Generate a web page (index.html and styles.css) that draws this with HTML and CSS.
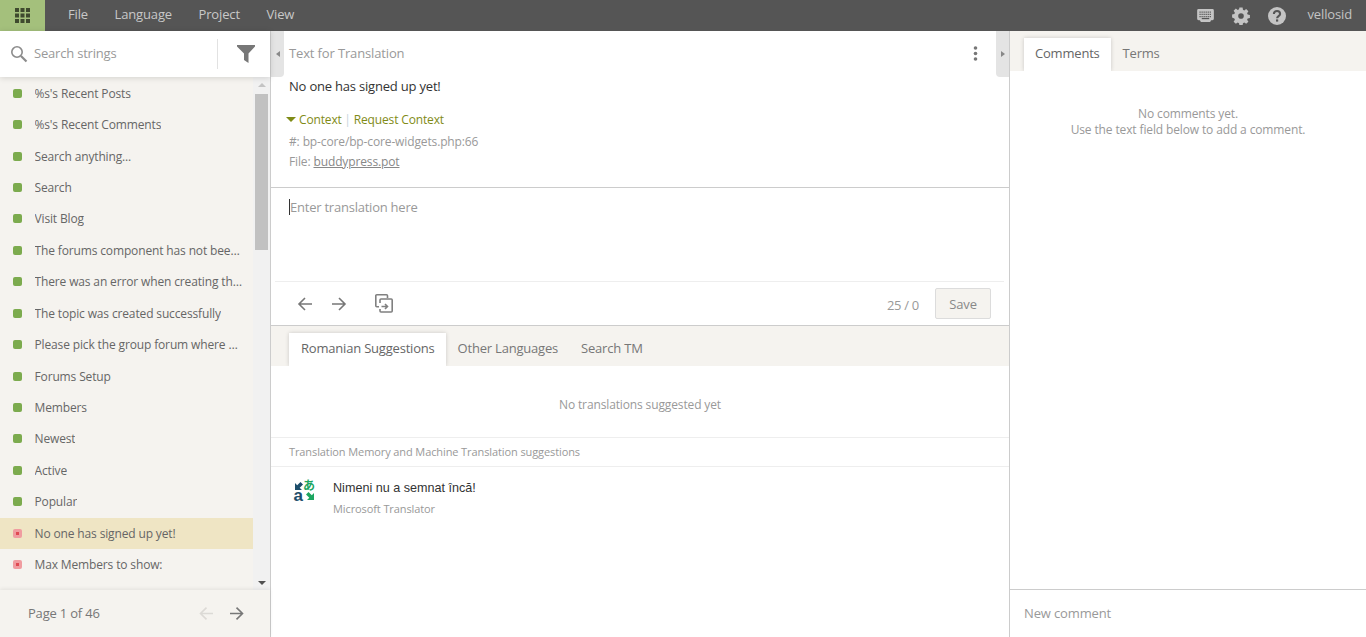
FILE: index.html
```html
<!DOCTYPE html>
<html lang="en">
<head>
<meta charset="utf-8">
<title>Translation editor</title>
<link rel="stylesheet" href="styles.css">
</head>
<body>
<header class="topbar">
  <div class="apps">
    <svg width="15" height="15" viewBox="0 0 15 15" fill="#3f4a2e"><rect x="0" y="0" width="4" height="4"/><rect x="5.5" y="0" width="4" height="4"/><rect x="11" y="0" width="4" height="4"/><rect x="0" y="5.5" width="4" height="4"/><rect x="5.5" y="5.5" width="4" height="4"/><rect x="11" y="5.5" width="4" height="4"/><rect x="0" y="11" width="4" height="4"/><rect x="5.5" y="11" width="4" height="4"/><rect x="11" y="11" width="4" height="4"/></svg>
  </div>
  <nav class="menu"><span>File</span><span>Language</span><span>Project</span><span>View</span></nav>
  <div class="tools">
    <svg class="ic-kb" width="17" height="13" viewBox="0 0 18 14"><path fill="#c4c4c4" d="M1.5 0h15A1.5 1.5 0 0 1 18 1.5v9a1.5 1.5 0 0 1-1.5 1.5H15l-1 2H4l-1-2H1.500A1.500 1.500 0 0 1 0 10.500v-9A1.500 1.500 0 0 1 1.500 0z"/><path stroke="#555" stroke-width="1.300" stroke-dasharray="1.300 .9" d="M2.500 3.300h13M2.500 5.700h13M2.500 8.100h13"/><path stroke="#555" stroke-width="1.300" d="M5 10.300h8"/></svg>
    <svg class="ic-gear" width="18" height="18" viewBox="-.6 -.6 19.200 19.200"><path fill="#c4c4c4" fill-rule="evenodd" d="M7.300 0h3.400l.4 2.400 1.400.6 2-1.400 2.400 2.400-1.400 2 .6 1.400 2.400.4v3.400l-2.400.4-.6 1.400 1.400 2-2.400 2.400-2-1.400-1.400.6-.4 2.400H7.300l-.4-2.400-1.400-.6-2 1.400-2.400-2.400 1.400-2-.6-1.400L-.5 10.700V7.300l2.400-.4.600-1.400-1.400-2 2.400-2.400 2 1.400 1.400-.6zM9 6a3 3 0 1 0 0 6 3 3 0 0 0 0-6z"/></svg>
    <svg class="ic-help" width="18" height="18" viewBox="0 0 18 18"><circle cx="9" cy="9" r="9" fill="#c4c4c4"/><path d="M5.900 7a3.100 3 0 0 1 6.200-.1c0 2.200-3 2.200-3 4.300" fill="none" stroke="#555" stroke-width="2.100"/><rect x="8" y="12.400" width="2.200" height="2.200" fill="#555"/></svg>
    <span class="user">vellosid</span>
  </div>
</header>
<div class="app">
  <aside class="side">
    <div class="search">
      <svg width="18" height="18" viewBox="0 0 18 18" fill="none" stroke="#8c8c8c"><circle cx="7" cy="7" r="5.200" stroke-width="1.600"/><path d="M11 11l5.500 5.500" stroke-width="2.200"/></svg>
      <span class="search-text">Search strings</span>
      <span class="search-div"></span>
      <svg class="funnel" width="18" height="18" viewBox="0 0 18 18"><path fill="#777" d="M0 0h18v1.500L11.500 8.500V18L7 15V8.500L0 1.500z"/></svg>
    </div>
    <div class="listwrap">
      <ul class="list">
        <li class="row"><i class="dot"></i><span class="label">%s's Recent Posts</span></li>
        <li class="row"><i class="dot"></i><span class="label">%s's Recent Comments</span></li>
        <li class="row"><i class="dot"></i><span class="label">Search anything...</span></li>
        <li class="row"><i class="dot"></i><span class="label">Search</span></li>
        <li class="row"><i class="dot"></i><span class="label">Visit Blog</span></li>
        <li class="row"><i class="dot"></i><span class="label">The forums component has not been set up yet.</span></li>
        <li class="row"><i class="dot"></i><span class="label">There was an error when creating the topic</span></li>
        <li class="row"><i class="dot"></i><span class="label">The topic was created successfully</span></li>
        <li class="row"><i class="dot"></i><span class="label">Please pick the group forum where you would like</span></li>
        <li class="row"><i class="dot"></i><span class="label">Forums Setup</span></li>
        <li class="row"><i class="dot"></i><span class="label">Members</span></li>
        <li class="row"><i class="dot"></i><span class="label">Newest</span></li>
        <li class="row"><i class="dot"></i><span class="label">Active</span></li>
        <li class="row"><i class="dot"></i><span class="label">Popular</span></li>
        <li class="row row-on"><i class="dot dot-red"></i><span class="label">No one has signed up yet!</span></li>
        <li class="row"><i class="dot dot-red"></i><span class="label">Max Members to show:</span></li>
      </ul>
      <div class="scrollbar">
        <span class="arr arr-up"></span>
        <span class="thumb"></span>
        <span class="arr arr-down"></span>
      </div>
    </div>
    <div class="pager">
      <span class="page-text">Page 1 of 46</span>
      <svg class="pg-prev" width="14" height="13" viewBox="0 0 14 13" fill="none" stroke="#dcdad6" stroke-width="1.600"><path d="M14 6.500H1.500M7.500 .6L1.500 6.500l6 5.900"/></svg>
      <svg class="pg-next" width="14" height="13" viewBox="0 0 14 13" fill="none" stroke="#777" stroke-width="1.600"><path d="M0 6.500h12.500M6.500 .6l6 5.900-6 5.900"/></svg>
    </div>
  </aside>
  <main class="center">
    <section class="source">
      <div class="src-head"><span>Text for Translation</span>
        <svg class="dots" width="5" height="15" viewBox="0 0 5 15" fill="#777"><circle cx="2.500" cy="2" r="1.800"/><circle cx="2.500" cy="7.500" r="1.800"/><circle cx="2.500" cy="13" r="1.800"/></svg>
      </div>
      <p class="src-text">No one has signed up yet!</p>
      <div class="ctx"><i class="tri"></i><span>Context</span><span class="pipe">|</span><span>Request Context</span></div>
      <div class="meta">#: bp-core/bp-core-widgets.php:66</div>
      <div class="meta">File: <u>buddypress.pot</u></div>
      <span class="tab-l"><i></i></span>
      <span class="tab-r"><i></i></span>
    </section>
    <section class="editor">
      <div class="input"><span class="caret"></span>Enter translation here</div>
      <div class="actions">
        <svg width="16" height="14" viewBox="0 0 16 14" fill="none" stroke="#777" stroke-width="1.600"><path d="M15 7H2M8 1L2 7l6 6"/></svg>
        <svg class="act-next" width="16" height="14" viewBox="0 0 16 14" fill="none" stroke="#777" stroke-width="1.600"><path d="M1 7h13M8 1l6 6-6 6"/></svg>
        <svg class="act-copy" width="18" height="19" viewBox="0 0 18 19" fill="none" stroke="#808080" stroke-width="1.600"><path d="M12.500 4V1.800a1 1 0 0 0-1-1H1.800a1 1 0 0 0-1 1v10a1 1 0 0 0 1 1H4"/><path d="M5 9V6a1 1 0 0 1 1-1h10.200a1 1 0 0 1 1 1v11a1 1 0 0 1-1 1H6a1 1 0 0 1-1-1v-2"/><path d="M6.500 12.500h6M10 10l2.500 2.500L10 15"/></svg>
        <span class="count">25 / 0</span>
        <span class="save">Save</span>
      </div>
    </section>
    <section class="suggest">
      <div class="tabs tabs-s"><span class="tab tab-on">Romanian Suggestions</span><span class="tab">Other Languages</span><span class="tab">Search TM</span></div>
      <div class="none">No translations suggested yet</div>
      <div class="tm-head">Translation Memory and Machine Translation suggestions</div>
      <div class="tm">
        <svg class="ms" width="23" height="23" viewBox="0 0 23 23">
          <path fill="#1d4e6b" d="M2 4l2.200 2.200L7.500 3 10 5.500 6.700 8.800 9 11H2z"/>
          <text x="0.500" y="22" class="ms-a">a</text>
          <text x="10" y="11" class="ms-j">あ</text>
          <path fill="#1ca560" d="M21 14v7h-7l2.300-2.300-3.300-3.300 2.500-2.500 3.300 3.300z"/>
        </svg>
        <div class="tm-body">
          <div class="tm-text">Nimeni nu a semnat încă!</div>
          <div class="tm-src">Microsoft Translator</div>
        </div>
      </div>
    </section>
  </main>
  <aside class="right">
    <div class="tabs tabs-r"><span class="tab tab-on">Comments</span><span class="tab">Terms</span></div>
    <div class="empty">No comments yet.<br>Use the text field below to add a comment.</div>
    <div class="newc">New comment</div>
  </aside>
</div>
</body>
</html>
```

FILE: styles.css
```css
* { box-sizing: border-box; }
html, body { margin: 0; height: 100%; overflow: hidden; }
body { font-family: "Open Sans", sans-serif; font-size: 13px; letter-spacing: -.14px; color: #777; background: #fff; display: flex; flex-direction: column; height: 637px; }
ul { list-style: none; margin: 0; padding: 0; }
p { margin: 0; }

.topbar { height: 31px; flex: none; background: #555; display: flex; align-items: center; }
.apps { width: 45px; height: 31px; background: #a4c07c; display: flex; align-items: center; justify-content: center; }
.menu { display: flex; gap: 26.5px; margin-left: 23px; padding-bottom: 3px; color: #c8c8c8; }
.tools { margin-left: auto; display: flex; align-items: center; padding-right: 14px; color: #c4c4c4; }
.ic-gear { margin-left: 18px; }
.ic-help { margin-left: 18px; }
.user { margin-left: 22px; padding-bottom: 3px; }

.app { flex: 1; display: flex; min-height: 0; }

.side { width: 271px; flex: none; border-right: 1px solid #ccc; display: flex; flex-direction: column; background: #f5f3ef; }
.search { height: 46px; flex: none; background: #fff; display: flex; align-items: center; padding-left: 10px; box-shadow: 0 1px 6px rgba(0,0,0,.14); position: relative; z-index: 1; }
.search-text { margin: -2px 0 0 6px; width: 183px; color: #999; letter-spacing: -.2px; }
.search-div { width: 1px; height: 30px; background: #e2e2e2; }
.funnel { margin-left: 19px; }

.listwrap { flex: 1; min-height: 0; display: flex; overflow: hidden; }
.list { width: 253px; flex: none; padding-top: 1px; }
.row { height: 31.43px; display: flex; align-items: center; padding: 0 10px 1px 13px; color: #666; font-size: 12px; letter-spacing: -.14px; }
.row-on { background: #efe5c4; }
.dot { width: 9px; height: 9px; flex: none; border-radius: 2px; background: #7cab4e; }
.dot-red { background: linear-gradient(#df4a52, #df4a52) center / 3px 3px no-repeat, #f09ca0; }
.label { margin-left: 12.500px; white-space: nowrap; overflow: hidden; text-overflow: ellipsis; }

.scrollbar { width: 17px; flex: none; background: #f1f1f1; display: flex; flex-direction: column; align-items: center; padding-top: 6px; }
.arr { width: 0; height: 0; border-left: 4px solid transparent; border-right: 4px solid transparent; }
.arr-up { border-bottom: 4px solid #c4c4c4; }
.arr-down { border-top: 4px solid #505050; margin-top: auto; margin-bottom: 5px; }
.thumb { width: 13px; height: 156px; background: #c1c1c1; margin-top: 7px; }

.pager { height: 47px; flex: none; display: flex; align-items: center; padding-left: 28px; box-shadow: 0 -1px 4px rgba(0,0,0,.08); position: relative; color: #777; }
.page-text { width: 171px; padding-bottom: 2px; letter-spacing: -.2px; }
.pg-next { margin-left: 17px; }

.center { width: 739px; flex: none; border-right: 1px solid #ccc; display: flex; flex-direction: column; }
.source { height: 157px; flex: none; padding: 0 18px; border-bottom: 1px solid #ccc; position: relative; }
.src-head { height: 46px; padding: 0 13px 2px 0; display: flex; align-items: center; justify-content: space-between; color: #999; }
.src-text { color: #333; line-height: 20px; margin-top: -1px; letter-spacing: -.2px; }
.ctx { display: flex; align-items: center; margin-top: 13px; height: 20px; color: #7f8b16; margin-left: -3px; font-size: 12px; letter-spacing: -.14px; }
.tri { width: 0; height: 0; border-left: 5px solid transparent; border-right: 5px solid transparent; border-top: 5px solid #7f8b16; margin-right: 3px; }
.pipe { color: #c5d3dc; margin: 0 3px 0 2.500px; }
.meta { color: #999; height: 21px; line-height: 21px; margin-top: 2px; font-size: 12px; letter-spacing: -.13px; }
.meta + .meta { margin-top: -1px; }
.meta u { color: #888; }
.tab-l, .tab-r { position: absolute; top: 0; width: 13px; height: 46px; background: #e4e4e4; display: flex; align-items: center; justify-content: center; }
.tab-l { left: 0; border-radius: 0 0 4px 0; }
.tab-r { right: 0; border-radius: 0 0 0 4px; }
.tab-l i { border: 3.500px solid transparent; border-left-width: 0; border-right: 4px solid #888; }
.tab-r i { border: 3.500px solid transparent; border-right-width: 0; border-left: 4px solid #888; }

.editor { height: 138px; flex: none; border-bottom: 1px solid #ccc; display: flex; flex-direction: column; }
.input { height: 94px; margin: 0 5px 0 4px; padding: 9px 0 0 14px; line-height: 20px; color: #999; border-bottom: 1px solid #eee; display: flex; align-items: flex-start; letter-spacing: -.23px; }
.caret { width: 1px; height: 16px; background: #333; margin-top: 2px; }
.actions { flex: 1; display: flex; align-items: center; padding: 0 18px 0 26px; }
.act-next { margin-left: 18px; }
.act-copy { margin-left: 28px; }
.count { margin: 2px 16px 0 auto; color: #999; letter-spacing: -.3px; }
.save { width: 56px; height: 31px; border: 1px solid #dcdcdc; border-radius: 2px; background: #f5f3ef; display: flex; align-items: center; justify-content: center; color: #888; }

.tabs { background: #f5f3ef; display: flex; height: 40px; align-items: flex-end; }
.tabs-s { padding-left: 18px; }
.tabs-r { padding-left: 14px; }
.tab { height: 33px; display: flex; align-items: center; padding: 0 11px 3px 12px; color: #777; letter-spacing: -.2px; }
.tab-on { background: #fff; color: #666; box-shadow: 0 0 4px rgba(0,0,0,.18); clip-path: inset(-5px -5px 0 -5px); }
.tabs-r .tab-on { padding-left: 11px; }

.suggest { flex: 1; min-height: 0; }
.none { height: 72px; border-bottom: 1px solid #eee; display: flex; align-items: center; justify-content: center; color: #999; font-size: 12px; padding-top: 6px; letter-spacing: -.13px; }
.tm-head { height: 29px; border-bottom: 1px solid #eee; padding: 0 0 2px 18px; display: flex; align-items: center; color: #999; font-size: 11px; letter-spacing: -.1px; }
.tm { display: flex; padding: 12px 0 0 22px; }
.ms { flex: none; }
.ms-a { font: 700 17px "Liberation Sans", sans-serif; fill: #1d4e6b; letter-spacing: 0; }
.ms-j { font: 700 12px "Noto Sans CJK JP", sans-serif; fill: #1ca560; letter-spacing: 0; }
.tm-body { margin-left: 17px; padding-top: 2px; }
.tm-text { font-family: "Liberation Sans", sans-serif; font-size: 12.600px; letter-spacing: 0; color: #333; line-height: 14px; }
.tm-src { font-size: 11px; color: #999; margin-top: 6px; line-height: 16px; letter-spacing: -.1px; }

.right { flex: 1; display: flex; flex-direction: column; min-width: 0; }
.empty { flex: 1; padding-top: 35px; text-align: center; color: #999; font-size: 12px; line-height: 16px; letter-spacing: -.13px; }
.newc { height: 48px; flex: none; border-top: 1px solid #ccc; padding: 0 0 2px 14px; display: flex; align-items: center; color: #999; }
```
